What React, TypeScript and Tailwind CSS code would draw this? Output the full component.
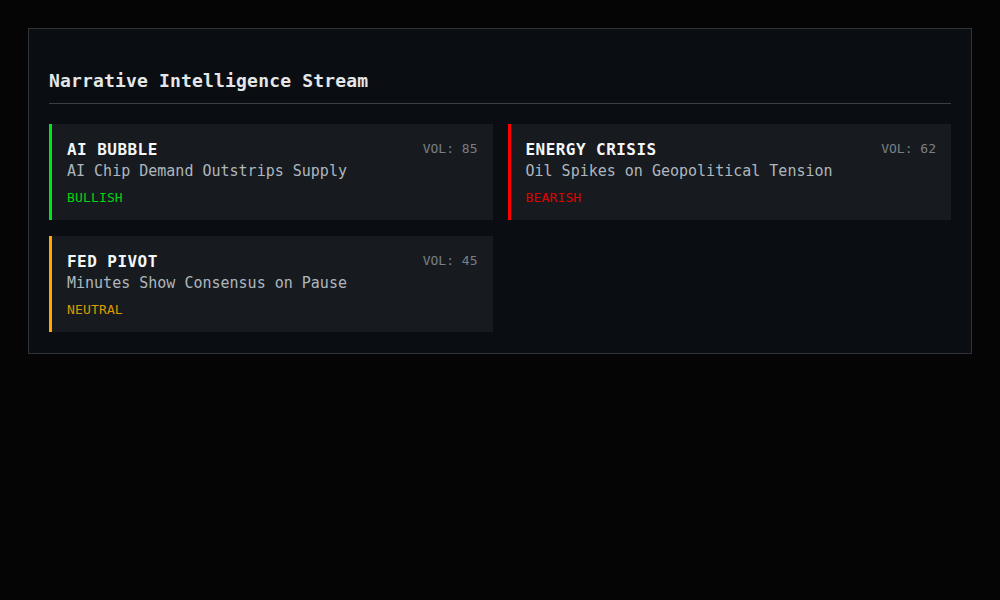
const narratives = [
  {
    id: "ai",
    tag: "AI BUBBLE",
    headline: "AI Chip Demand Outstrips Supply",
    vol: 85,
    sentiment: "BULLISH",
    bar: "border-[#00e61a]",
    text: "text-[#00d414]",
  },
  {
    id: "energy",
    tag: "ENERGY CRISIS",
    headline: "Oil Spikes on Geopolitical Tension",
    vol: 62,
    sentiment: "BEARISH",
    bar: "border-[#ff0000]",
    text: "text-[#e00000]",
  },
  {
    id: "fed",
    tag: "FED PIVOT",
    headline: "Minutes Show Consensus on Pause",
    vol: 45,
    sentiment: "NEUTRAL",
    bar: "border-[#ffa800]",
    text: "text-[#d99a00]",
  },
]

export default function App() {
  return (
    <div
      className="min-h-screen w-full bg-[#050505] p-7"
      style={{ fontFamily: '"DejaVu Sans Mono", "Liberation Mono", monospace' }}
    >
      <section className="border border-[#2f3338] bg-[#0a0e12] px-5 pb-[21px] pt-5">
        {/* Header */}
        <header className="mt-[18px] mb-5 border-b border-[#3c4046] pb-[8px]">
          <h2 className="text-[18px] leading-[28px] font-bold tracking-[0.17px] text-[#e4e6e8]">
            Narrative Intelligence Stream
          </h2>
        </header>

        {/* Cards */}
        <div className="grid grid-cols-2 gap-x-[15px] gap-y-4">
          {narratives.map((n) => (
            <div
              key={n.id}
              className={`border-l-[3px] ${n.bar} bg-[#171b20] px-[15px] pt-[16px] pb-[13px]`}
            >
              <div className="flex items-start justify-between">
                <div>
                  <div className="text-[16px] leading-[20px] font-bold tracking-[0.45px] text-[#f4f6f8]">
                    {n.tag}
                  </div>
                  <div className="text-[15px] leading-[22px] text-[#aeb6be]">
                    {n.headline}
                  </div>
                </div>
                <div className="text-[13px] leading-[18px] text-[#7a7f85]">VOL: {n.vol}</div>
              </div>
              <div className={`mt-[7px] text-[13px] leading-[18px] tracking-[0.15px] ${n.text}`}>
                {n.sentiment}
              </div>
            </div>
          ))}
        </div>
      </section>
    </div>
  )
}
